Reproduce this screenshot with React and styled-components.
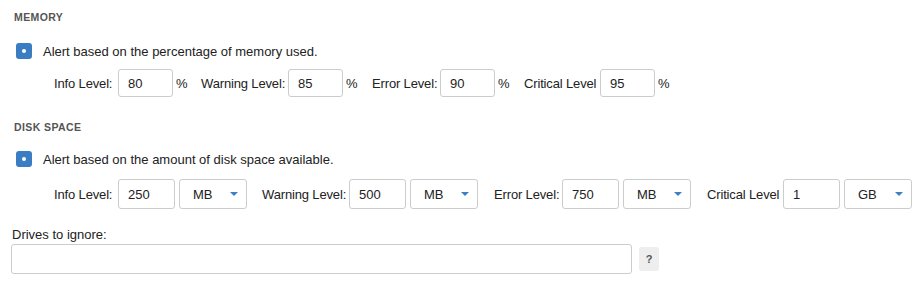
import React from "react";
import styled, { createGlobalStyle } from "styled-components";

const GlobalStyle = createGlobalStyle`
  body {
    margin: 0;
    background: #fff;
    font-family: "Liberation Sans", Arial, sans-serif;
    color: #222;
  }
`;

const Page = styled.div`
  padding: 10px 12px 0 12px;
  width: 924px;
  box-sizing: border-box;
`;

const SectionTitle = styled.div`
  font-size: 10.5px;
  font-weight: bold;
  letter-spacing: 0.4px;
  color: #555;
  text-transform: uppercase;
  height: 14px;
  line-height: 14px;
  padding-left: 2px;
  margin-bottom: ${(p) => p.gap || "18px"};
`;

const CheckRow = styled.label`
  display: flex;
  align-items: center;
  gap: 11px;
  font-size: 13px;
  padding-left: 4px;
  height: 18px;
`;

const Check = styled.span`
  width: 16px;
  height: 16px;
  border-radius: 3px;
  background: #3b7dc3;
  display: flex;
  align-items: center;
  justify-content: center;
  &::after {
    content: "";
    width: 4px;
    height: 4px;
    border-radius: 50%;
    background: #fff;
  }
`;

const LevelRow = styled.div`
  display: flex;
  align-items: center;
  padding-left: 42px;
  margin-top: ${(p) => p.top || "9px"};
  margin-bottom: ${(p) => p.bottom || "20px"};
  font-size: 13px;
`;

const Group = styled.div`
  display: flex;
  align-items: center;
  margin-right: ${(p) => p.space || "15px"};
`;

// labels keep the width they have in the original form
const Label = styled.span`
  width: ${(p) => p.w};
  margin-right: 4px;
  white-space: nowrap;
  letter-spacing: -0.15px;
`;

const Box = styled.input`
  box-sizing: border-box;
  width: ${(p) => p.w || "55px"};
  height: ${(p) => p.h || "28px"};
  border: 1px solid #ccc;
  border-radius: 3px;
  padding: 0 9px;
  font-family: inherit;
  font-size: 13px;
  color: #222;
  outline: none;
`;

const Unit = styled.span`
  width: 10px;
  margin-left: 3px;
`;

const Select = styled.div`
  box-sizing: border-box;
  width: 68px;
  height: 30px;
  margin-left: 4px;
  border: 1px solid #ccc;
  border-radius: 3px;
  display: flex;
  align-items: center;
  justify-content: space-between;
  padding: 0 8px 0 13px;
  font-size: 13px;
`;

const Caret = styled.span`
  width: 0;
  height: 0;
  border-left: 4px solid transparent;
  border-right: 4px solid transparent;
  border-top: 4px solid #3b7fc4;
`;

const FieldLabel = styled.div`
  font-size: 13px;
  height: 16px;
  line-height: 16px;
  margin: 0 0 1px 0;
`;

const DriveRow = styled.div`
  display: flex;
  align-items: center;
  gap: 7px;
`;

const Help = styled.span`
  width: 20px;
  height: 24px;
  border-radius: 3px;
  background: #eee;
  color: #555;
  font-size: 11px;
  font-weight: bold;
  display: flex;
  align-items: center;
  justify-content: center;
`;

const memory = [
  { label: "Info Level:", w: "60px", value: "80", space: "15px" },
  { label: "Warning Level:", w: "83px", value: "85", space: "16px" },
  { label: "Error Level:", w: "64px", value: "90", space: "16px" },
  { label: "Critical Level", w: "72px", value: "95", space: "0" },
];

const disk = [
  { label: "Info Level:", w: "60px", value: "250", unit: "MB", space: "15px" },
  { label: "Warning Level:", w: "83px", value: "500", unit: "MB", space: "16px" },
  { label: "Error Level:", w: "64px", value: "750", unit: "MB", space: "16px" },
  { label: "Critical Level", w: "72px", value: "1", unit: "GB", space: "0" },
];

export default function App() {
  return (
    <>
      <GlobalStyle />
      <Page>
        <SectionTitle>Memory</SectionTitle>
        <CheckRow>
          <Check />
          Alert based on the percentage of memory used.
        </CheckRow>
        <LevelRow top="9px" bottom="23px">
          {memory.map((m) => (
            <Group key={m.label} space={m.space}>
              <Label w={m.w}>{m.label}</Label>
              <Box defaultValue={m.value} />
              <Unit>%</Unit>
            </Group>
          ))}
        </LevelRow>
        <SectionTitle gap="16px">Disk Space</SectionTitle>
        <CheckRow>
          <Check />
          Alert based on the amount of disk space available.
        </CheckRow>
        <LevelRow top="11px" bottom="18px">
          {disk.map((d) => (
            <Group key={d.label} space={d.space}>
              <Label w={d.w}>{d.label}</Label>
              <Box w="57px" h="30px" defaultValue={d.value} />
              <Select>
                {d.unit}
                <Caret />
              </Select>
            </Group>
          ))}
        </LevelRow>
        <FieldLabel>Drives to ignore:</FieldLabel>
        <DriveRow>
          <Box w="621px" h="30px" style={{ marginLeft: "-1px" }} />
          <Help>?</Help>
        </DriveRow>
      </Page>
    </>
  );
}
